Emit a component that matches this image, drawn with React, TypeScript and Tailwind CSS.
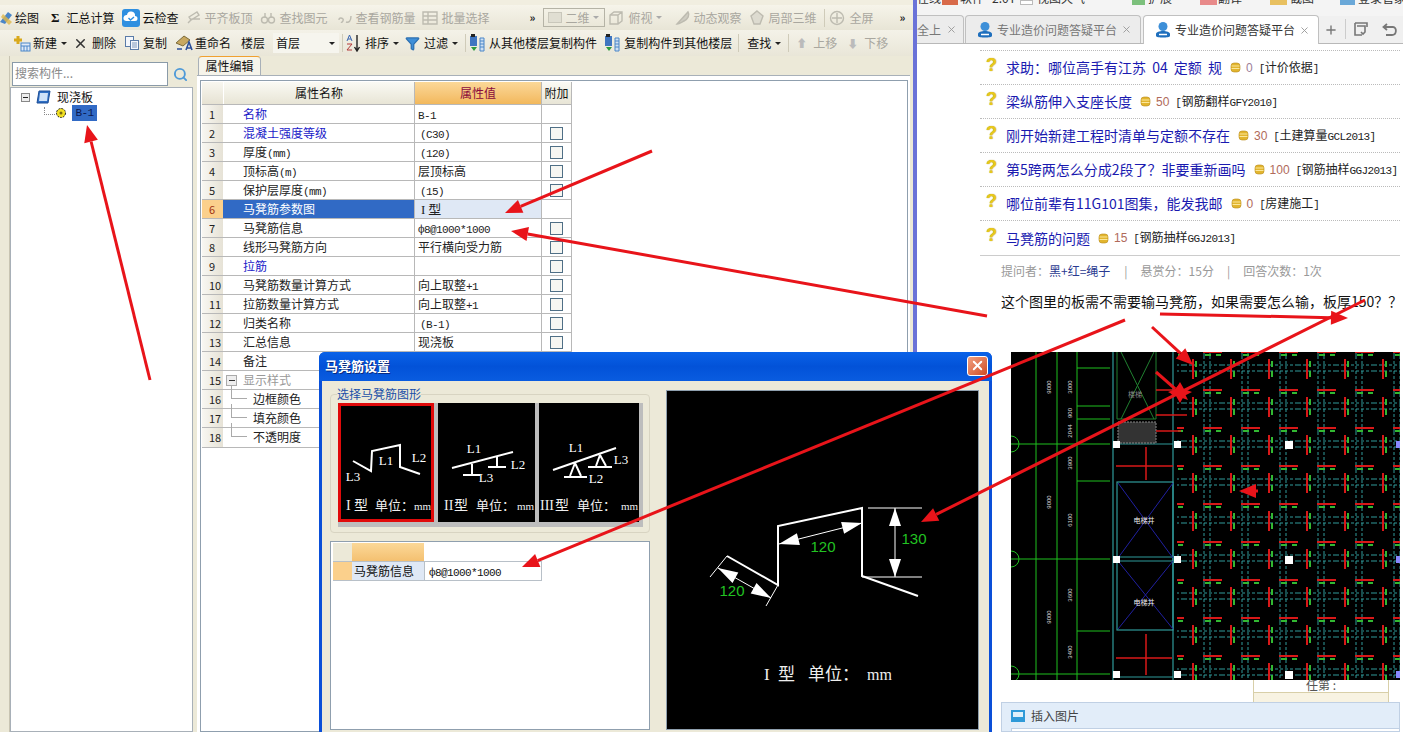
import type { ReactNode } from "react"
import { X, Plus, Search, Filter } from "lucide-react"

const cjk = { fontFamily: '"Noto Sans CJK SC", sans-serif' }
const serif = "Liberation Serif, serif"

function Caret({ muted }: { muted?: boolean }) {
  return <span className={`ml-[4px] h-0 w-0 border-x-[3px] border-t-[3px] border-x-transparent ${muted ? "border-t-[#aaa]" : "border-t-[#222]"}`} />
}

function Tool({ icon, label, muted, caret, gap, className }: { icon?: ReactNode; label: string; muted?: boolean; caret?: boolean; gap?: string; className?: string }) {
  return (
    <div className={`flex shrink-0 items-center ${className ?? ""}`}>
      {icon}
      <span className={`${gap ?? "ml-[4px]"} whitespace-nowrap text-[12px] ${muted ? "text-[#a9a79f]" : "text-[#111]"}`}>{label}</span>
      {caret && <Caret muted={muted} />}
    </div>
  )
}

function Sep({ className }: { className: string }) {
  return <div className={`h-[18px] w-px shrink-0 bg-[#cfcbb9] ${className}`} />
}

function Gray({ children }: { children: ReactNode }) {
  return <svg width="16" height="16" viewBox="0 0 16 16" fill="none" stroke="#bdbbb0" strokeWidth="1.4">{children}</svg>
}

function DocIcon() {
  return (
    <svg width="17" height="17" viewBox="0 0 17 17">
      <rect x="7" y="8" width="9" height="8" fill="#dfeaf8" stroke="#4a86c8" />
      <path d="M7 11h9M10 11v5M13 11v5" stroke="#4a86c8" />
      <path d="M4 1v8M0 5h8" stroke="#d9a91c" strokeWidth="3" />
    </svg>
  )
}

function CopyIcon() {
  return (
    <svg width="16" height="16" viewBox="0 0 16 16" fill="#f4f7fc" stroke="#5a7ba8">
      <rect x="1.5" y="1.5" width="8" height="10" />
      <rect x="6.5" y="5.5" width="8" height="9" />
      <path d="M8 8h5M8 10h5M8 12h5" stroke="#7d97bb" />
    </svg>
  )
}

function RenameIcon() {
  return (
    <svg width="18" height="18" viewBox="0 0 18 18">
      <path d="M1 9 9 2l6 4-7 6z" fill="#c8a860" stroke="#7b6b3a" />
      <path d="M2 15h5M11 16l3-8 3 8M12 14h4" stroke="#2b4f9a" strokeWidth="1.6" fill="none" />
    </svg>
  )
}

function SortIcon() {
  return (
    <svg width="16" height="18" viewBox="0 0 16 18" fill="none">
      <path d="M1 7 3.5 1 6 7M2 5h3" stroke="#3a66b0" />
      <path d="M1 10h5l-5 6h5" stroke="#b43a3a" />
      <path d="M11 1v15M8.5 13l2.5 4 2.5-4" stroke="#222" strokeWidth="1.4" />
    </svg>
  )
}

function FloorCopyIcon() {
  return (
    <svg width="16" height="18" viewBox="0 0 16 18">
      <rect x="1" y="2" width="7" height="10" fill="#3f75c0" />
      <rect x="2" y="0" width="4" height="3" fill="#222" />
      <path d="M2 13h6l-3 4z" fill="#2e9a3e" />
      <path d="M11 4h4v13h-4z" fill="#cfe0f2" stroke="#4a86c8" />
      <path d="M11 7h4M11 10h4M11 13h4" stroke="#4a86c8" />
    </svg>
  )
}

function CloudIcon() {
  return (
    <svg width="18" height="18" viewBox="0 0 18 18">
      <rect width="18" height="18" rx="3" fill="#2e8fe0" />
      <path d="M4 12a3 3 0 0 1 1-6 4 4 0 0 1 8 1 2.500 2.500 0 0 1 0 5z" fill="#fff" />
      <path d="m6.500 9 2 2 3.500-3" stroke="#2e8fe0" strokeWidth="1.400" fill="none" />
    </svg>
  )
}

function DrawIcon() {
  return (
    <svg width="13" height="16" viewBox="0 0 13 16">
      <path d="M0 12 8 2l4 3-7 9z" fill="#4a86c8" />
      <path d="M3 4 12 12 9 15 1 7z" fill="#e0b84a" opacity=".8" />
    </svg>
  )
}

function TabIcon() {
  return (
    <svg width="16" height="18" viewBox="0 0 16 18">
      <circle cx="8" cy="5.500" r="4.500" fill="#3d8fd8" />
      <path d="M1 13c0-4 14-4 14 0v2c0 2-14 2-14 0z" fill="#1f6fbd" />
      <path d="M4 13.500h8" stroke="#fff" strokeWidth="1.500" />
    </svg>
  )
}

function Coin() {
  return (
    <svg width="11" height="11" viewBox="0 0 11 11" className="shrink-0">
      <rect x="1" y="1" width="9" height="9" rx="3" fill="#e2b52e" stroke="#b88a18" strokeWidth=".6" />
      <path d="M1.500 4h8M1.500 6.500h8" stroke="#fbe79a" />
    </svg>
  )
}

function Row1() {
  return (
    <div className="flex h-[25px] items-center bg-linear-to-b from-[#f6f4ea] to-[#e8e5d6]">
      <Tool icon={<DrawIcon />} label="绘图" gap="ml-[2px]" />
      <Tool icon={<span className="text-[13px] font-bold text-[#111]" style={{ fontFamily: '"Liberation Serif", serif' }}>Σ</span>} label="汇总计算" gap="ml-[7px]" className="ml-[12px]" />
      <Tool icon={<CloudIcon />} label="云检查" gap="ml-[3px]" className="ml-[7px]" />
      <Tool muted icon={<Gray><path d="M2 13 6 9h8M3 7l8-5 2 3-8 5z" /></Gray>} label="平齐板顶" gap="ml-[3px]" className="ml-[7px]" />
      <Tool muted icon={<Gray><circle cx="4.500" cy="10" r="3" /><circle cx="11.500" cy="10" r="3" /><path d="M5 3v5M11 3v5" /></Gray>} label="查找图元" gap="ml-[4px]" className="ml-[7px]" />
      <Tool muted icon={<Gray><path d="M2 10c0-3 3-2 4-1s-1 4-2 3M9 12c3 1 5-1 5-6" /></Gray>} label="查看钢筋量" gap="ml-[3px]" className="ml-[9px]" />
      <Tool muted icon={<Gray><path d="M1 2h14v12H1zM1 6h14M1 10h14M6 2v12" /></Gray>} label="批量选择" gap="ml-[4px]" className="ml-[6px]" />
      <span className="ml-[40px] text-[11px] font-bold text-[#222]">»</span>
      <div className="ml-[8px] flex h-[19px] w-[62px] shrink-0 items-center border border-[#b5b3a6] pl-[4px]">
        <span className="h-[11px] w-[14px] border border-[#c9c7bb] bg-[#e0ded2]" />
        <span className="ml-[3px] text-[12px] text-[#a9a79f]">二维</span>
        <Caret muted />
      </div>
      <Tool muted caret icon={<Gray><path d="M2 5l4-3h8v9l-4 3H2zM2 5h8v9M10 5l4-3" /></Gray>} label="俯视" className="ml-[3px]" />
      <Tool muted icon={<Gray><path d="M2 14 13 2c2 3 0 7-4 9-2 1-5 3-7 3z" fill="#cfcdc2" /></Gray>} label="动态观察" gap="ml-[2px]" className="ml-[13px]" />
      <Tool muted icon={<Gray><path d="M8 1l6 5-3 8H5L2 6z" fill="#dddbd0" /></Gray>} label="局部三维" gap="ml-[3px]" className="ml-[8px]" />
      <Sep className="ml-[8px]" />
      <Tool muted icon={<Gray><circle cx="8" cy="8" r="6.500" /><path d="M8 3v10M3 8h10" /></Gray>} label="全屏" className="ml-[4px]" />
      <span className="ml-[26px] text-[11px] font-bold text-[#222]">»</span>
    </div>
  )
}

function Row2() {
  return (
    <div className="flex h-[26px] items-center bg-linear-to-b from-[#f4f2e8] to-[#e9e6d8] pl-[14px]">
      <Tool caret icon={<DocIcon />} label="新建" gap="ml-[2px]" />
      <Tool icon={<X size={15} strokeWidth={2.4} className="text-[#333]" />} label="删除" className="ml-[6px]" />
      <Tool icon={<CopyIcon />} label="复制" gap="ml-[3px]" className="ml-[8px]" />
      <Tool icon={<RenameIcon />} label="重命名" gap="ml-[2px]" className="ml-[8px]" />
      <span className="ml-[10px] text-[12px] text-[#111]">楼层</span>
      <div className="ml-[8px] flex h-[20px] w-[66px] items-center justify-between bg-[#f6f5ee] pl-[3px] pr-[4px] text-[12px] text-[#111]">
        首层
        <Caret />
      </div>
      <Sep className="ml-[3px]" />
      <Tool caret icon={<SortIcon />} label="排序" gap="ml-[3px]" className="ml-[3px]" />
      <Tool caret icon={<Filter size={15} className="fill-[#3f8fd8] text-[#2e70b0]" />} label="过滤" className="ml-[6px]" />
      <Sep className="ml-[7px]" />
      <Tool icon={<FloorCopyIcon />} label="从其他楼层复制构件" className="ml-[3px]" />
      <Tool icon={<FloorCopyIcon />} label="复制构件到其他楼层" className="ml-[7px]" />
      <Sep className="ml-[6px]" />
      <Tool caret label="查找" className="ml-[4px]" />
      <Sep className="ml-[7px]" />
      <Tool muted icon={<span className="w-[10px] text-center text-[11px] text-[#bbb]">⬆</span>} label="上移" gap="ml-[7px]" className="ml-[7px]" />
      <Tool muted icon={<span className="w-[10px] text-center text-[11px] text-[#bbb]">⬇</span>} label="下移" gap="ml-[7px]" className="ml-[10px]" />
    </div>
  )
}

function TreePanel() {
  return (
    <div className="flex w-[183px] shrink-0 flex-col pt-[5px]">
      <div className="flex h-[26px] items-center pl-[2px]">
        <div className="flex h-[24px] w-[156px] items-center border border-[#8a9aa8] bg-white pb-[3px] pl-[2px] text-[12px] text-[#8a8a8a]">搜索构件...</div>
        <Search size={15} strokeWidth={3} className="ml-[5px] text-[#4f9ad8]" />
      </div>
      <div className="flex-1 border border-[#a8b0b8] bg-white pl-[10px] pt-px">
        <div className="flex h-[16px] items-center">
          <span className="flex h-[9px] w-[9px] items-center justify-center border border-[#888] bg-[#eee]"><span className="h-px w-[5px] bg-[#222]" /></span>
          <svg width="15" height="15" viewBox="0 0 15 15" className="ml-[6px]"><path d="M3 1h11l-2 12H1z" fill="#2f6fc4" stroke="#1b4d96" /><path d="M4 3h8l-1 8H3z" fill="#cfe2f8" /></svg>
          <span className="ml-[6px] text-[12px] text-[#111]">现浇板</span>
        </div>
        <div className="flex h-[16px] items-center pl-[23px]">
          <span className="mb-[4px] h-[8px] w-[11px] border-b border-l border-dotted border-[#888]" />
          <svg width="12" height="12" viewBox="0 0 12 12"><circle cx="6" cy="6" r="4.500" fill="#f2e020" stroke="#222" strokeDasharray="2 1" /><circle cx="6" cy="6" r="1.500" fill="#7a6a10" /></svg>
          <span className="ml-[5px] flex h-[16px] w-[25px] items-center justify-center bg-[#316ac5] text-[11px] tracking-[-0.6px] text-[#0a1850]" style={{ fontFamily: '"Liberation Mono", monospace' }}>B-1</span>
        </div>
      </div>
    </div>
  )
}

type Prop = { name: string; unit?: string; value?: ReactNode; blue?: boolean; check?: boolean; selected?: boolean; gray?: boolean; leaf?: boolean; group?: boolean }

function Lat({ children, className }: { children: ReactNode; className?: string }) {
  return <span className={`text-[11px] tracking-[-0.6px] ${className ?? ""}`} style={{ fontFamily: '"Liberation Mono", monospace' }}>{children}</span>
}

const props: Prop[] = [
  { name: "名称", blue: true, value: <Lat>B-1</Lat> },
  { name: "混凝土强度等级", blue: true, check: true, value: <Lat className="ml-[2px]">(C30)</Lat> },
  { name: "厚度", unit: "(mm)", check: true, value: <Lat className="ml-[2px]">(120)</Lat> },
  { name: "顶标高", unit: "(m)", check: true, value: "层顶标高" },
  { name: "保护层厚度", unit: "(mm)", check: true, value: <Lat className="ml-[2px]">(15)</Lat> },
  { name: "马凳筋参数图", selected: true, value: <span className="ml-[3px] text-[13px] text-[#222]"><span style={{ fontFamily: serif }}>I</span> 型</span> },
  { name: "马凳筋信息", check: true, value: <Lat>ф8@1000*1000</Lat> },
  { name: "线形马凳筋方向", check: true, value: "平行横向受力筋" },
  { name: "拉筋", blue: true, check: true },
  { name: "马凳筋数量计算方式", check: true, value: <>向上取整<Lat>+1</Lat></> },
  { name: "拉筋数量计算方式", check: true, value: <>向上取整<Lat>+1</Lat></> },
  { name: "归类名称", check: true, value: <Lat className="ml-[2px]">(B-1)</Lat> },
  { name: "汇总信息", check: true, value: "现浇板" },
  { name: "备注" },
  { name: "显示样式", gray: true, group: true },
  { name: "边框颜色", leaf: true },
  { name: "填充颜色", leaf: true },
  { name: "不透明度", leaf: true },
]

function PropTable() {
  return (
    <div className="w-[370px] border-b border-[#b8b8b8]">
      <div className="flex h-[23px] border-b border-[#b8b8b8] text-[12px] text-[#111]">
        <div className="w-[21px] bg-linear-to-b from-[#f8f7f0] to-[#e6e2d3]" />
        <div className="flex w-[191px] items-center justify-center border-l border-white bg-linear-to-b from-[#fafaf4] to-[#e8e5d6]">属性名称</div>
        <div className="flex w-[127px] items-center justify-center border-l border-[#b8b8b8] bg-linear-to-b from-[#fbd898] to-[#f2b85c] text-[#8a0a3c]">属性值</div>
        <div className="flex w-[31px] items-center justify-center border-x border-[#b8b8b8] bg-linear-to-b from-[#fafaf4] to-[#e8e5d6]">附加</div>
      </div>
      {props.map((p, i) => (
        <div key={p.name} className="flex h-[19px] border-b border-[#b8b8b8] text-[12px] leading-[18px] text-[#222] last:border-b-0">
          <div className={`w-[21px] shrink-0 pl-[7px] text-[11px] ${i > 8 ? "pl-[4px]" : ""} ${p.selected ? "bg-[#fbd08c] text-[#a03010]" : "bg-linear-to-r from-[#f8f7f2] to-[#e6e2d6] text-[#222]"}`}>{i + 1}</div>
          <div className={`relative w-[191px] shrink-0 whitespace-nowrap ${p.leaf ? "pl-[30px]" : "pl-[20px]"} ${p.selected ? "bg-[#316ac5] text-white" : ""} ${p.blue ? "text-[#1a1ac8]" : ""} ${p.gray ? "text-[#999]" : ""}`}>
            {p.group && (
              <span className="absolute left-[3px] top-[4px] flex h-[11px] w-[11px] items-center justify-center border border-[#aaa] bg-[#eee]"><span className="h-px w-[6px] bg-[#333]" /></span>
            )}
            {p.leaf && <span className="absolute left-[8px] top-[-5px] h-[14px] w-[16px] border-b border-l border-[#aaa]" />}
            {p.name}
            {p.unit && <Lat>{p.unit}</Lat>}
          </div>
          <div className={`w-[127px] shrink-0 whitespace-nowrap border-l border-[#b8b8b8] pl-[3px] ${p.selected ? "bg-[#dfe8f5]" : ""}`}>{p.value}</div>
          <div className="flex w-[31px] shrink-0 items-center justify-center border-x border-[#b8b8b8]">
            {p.check && <span className="h-[13px] w-[13px] border border-[#4f6f86] bg-[#f6f6f2]" />}
          </div>
        </div>
      ))}
    </div>
  )
}

function ThumbLabel({ x, y, children }: { x: number; y: number; children: string }) {
  return <text x={x} y={y} textAnchor="middle" fontSize="13" fontFamily={serif} fill="#fff">{children}</text>
}

function ThumbCaption({ roman, x }: { roman: string; x: number[] }) {
  return (
    <text y={107} fontSize="14" fill="#eee" style={cjk}>
      <tspan x={x[0]} fontFamily={serif}>{roman}</tspan>
      <tspan x={x[1]}>型</tspan>
      <tspan x={x[2]} fontSize="13">{"单位\uFF1A"}</tspan>
      <tspan x={x[3]} fontSize="11" fontFamily={serif}>mm</tspan>
    </text>
  )
}

function ThumbOne() {
  return (
    <svg width="96" height="119" viewBox="3 3 90 113" className="shrink-0 border-[3px] border-[#e00a0a] bg-black">
      <polyline points="15,58 33,68 34,48 62,42 62,64 82,71" fill="none" stroke="#fff" strokeWidth="2" />
      <ThumbLabel x={48} y={62}>L1</ThumbLabel>
      <ThumbLabel x={81} y={59}>L2</ThumbLabel>
      <ThumbLabel x={15} y={78}>L3</ThumbLabel>
      <ThumbCaption roman="I" x={[8, 16, 37, 76]} />
    </svg>
  )
}

function ThumbTwo() {
  return (
    <svg width="97" height="119" viewBox="0 0 97 119" className="ml-[4px] shrink-0 bg-black">
      <path d="M14 65 75 49M34 61v11M25 72h17M59 54v10M50 64h18" fill="none" stroke="#fff" strokeWidth="2" />
      <ThumbLabel x={36} y={50}>L1</ThumbLabel>
      <ThumbLabel x={80} y={66}>L2</ThumbLabel>
      <ThumbLabel x={48} y={79}>L3</ThumbLabel>
      <ThumbCaption roman="II" x={[6, 16, 38, 79]} />
    </svg>
  )
}

function ThumbThree() {
  return (
    <svg width="100" height="119" viewBox="0 0 100 119" className="ml-[4px] shrink-0 bg-black">
      <path d="M14 67 77 45M36 60l-5 13M36 60l6 13M25 74h23M61 52l-4 11M61 52l6 11M49 64h24" fill="none" stroke="#fff" strokeWidth="2" />
      <ThumbLabel x={37} y={49}>L1</ThumbLabel>
      <ThumbLabel x={82} y={61}>L3</ThumbLabel>
      <ThumbLabel x={57} y={80}>L2</ThumbLabel>
      <ThumbCaption roman="III" x={[1, 16, 38, 82]} />
    </svg>
  )
}

function Preview() {
  return (
    <svg width="311" height="338" viewBox="0 0 311 338" className="block bg-black">
      <polyline points="60,165 111,194 111,135 195,117 195,185 251,205" fill="none" stroke="#fff" strokeWidth="2" />
      <path d="M60 165 43 186M111 194 99 215M51 177 104 207M112 153 195 132M201 117h54M195 186h60M228 117v69" stroke="#fff" strokeWidth="1" fill="none" />
      <path d="M228 117l-6 18h12zM228 186l-6-18h12zM112 153l20.900 .9-3-11.600zM195 132l-17.900 10.700-3-11.600zM51 177l14.500 15 5.800-10.400zM104 207l-20.300-4.600 5.800-10.400z" fill="#fff" />
      <g fill="#22c322" fontSize="15" fontFamily="Liberation Sans, sans-serif" textAnchor="middle">
        <text x={65} y={205}>120</text>
        <text x={156} y={161}>120</text>
        <text x={247} y={153}>130</text>
      </g>
      <text y={289} fontSize="17" fill="#eee" style={cjk}>
        <tspan x={97} fontFamily={serif}>I</tspan>
        <tspan x={111}>型</tspan>
        <tspan x={141}>{"单位\uFF1A"}</tspan>
        <tspan x={200} fontSize="16" fontFamily={serif}>mm</tspan>
      </text>
    </svg>
  )
}

function Dialog() {
  return (
    <div className="absolute left-[319px] top-[352px] flex h-[380px] w-[673px] flex-col overflow-hidden rounded-t-[6px] bg-[#0a4fd8]">
      <div className="flex h-[29px] shrink-0 items-center justify-between bg-linear-to-b from-[#0a62e8] via-[#0352d8] to-[#0a5ce0] pb-[2px] pl-[6px] pr-[4px]">
        <span className="text-[13px] font-bold text-white [text-shadow:1px_1px_0_#0a2a80]">马凳筋设置</span>
        <span className="flex h-[20px] w-[21px] items-center justify-center rounded-[3px] border border-white bg-linear-to-br from-[#f0a080] to-[#d04a20]">
          <X size={15} strokeWidth={3} className="text-white" />
        </span>
      </div>
      <div className="mx-[3px] flex flex-1 bg-[#ece9d8] pl-[8px] pt-[6px]">
        <div className="w-[320px] shrink-0">
          <fieldset className="h-[146px] rounded-[4px] border border-[#d8d4c2] pl-[7px]">
            <legend className="-ml-[1px] text-[12px] leading-[14px] text-[#1a4fa8]">选择马凳筋图形</legend>
            <div className="mt-[2px] flex h-[124px] w-[305px] bg-[#bdbdbd]">
              <ThumbOne />
              <ThumbTwo />
              <ThumbThree />
            </div>
          </fieldset>
          <div className="mt-[8px] h-[189px] border border-[#8f9fae] bg-white pl-[2px] pt-px">
            <div className="flex h-[18px] w-[209px]">
              <div className="w-[19px] bg-[#ece9d8]" />
              <div className="w-[72px] bg-linear-to-b from-[#fbd898] to-[#f4c070]" />
              <div className="flex-1" />
            </div>
            <div className="flex h-[20px] w-[209px] border-y border-[#b8c0c8] text-[12px] leading-[18px] text-[#111]">
              <div className="w-[19px] bg-[#fbd08c]" />
              <div className="w-[72px] bg-[#dfe8f5] pl-[2px]">马凳筋信息</div>
              <div className="flex-1 border-x border-[#b8c0c8] pl-[4px]"><Lat>ф8@1000*1000</Lat></div>
            </div>
          </div>
        </div>
        <div className="ml-[16px] mt-[3px] h-[340px] w-[313px] shrink-0 self-start border border-[#8f9fae]">
          <Preview />
        </div>
      </div>
    </div>
  )
}

const dims: [number, number, string][] = [
  [40, 35, "9000"], [61, 35, "3000"], [61, 61, "900"], [61, 79, "2044"], [61, 111, "3900"],
  [40, 150, "9000"], [61, 168, "6100"], [61, 243, "3600"], [40, 265, "9000"], [61, 300, "3400"],
]

function CadImage() {
  return (
    <svg width="389" height="328" viewBox="0 0 389 328" className="block bg-black">
      <defs>
        <pattern id="cell" x="173" y="4" width="38" height="38" patternUnits="userSpaceOnUse">
          <path d="M0 9h38M0 15h38M20 0v38M26 0v38" stroke="#2f9a9a" strokeDasharray="3 2" fill="none" />
          <path d="M9 3v20M19 34h20" stroke="#d81818" strokeWidth="2" fill="none" />
          <path d="M12 5v6M12 15v6M21 37h6M32 37h5" stroke="#32b832" strokeWidth="2" fill="none" />
        </pattern>
      </defs>
      <rect x="166" width="223" height="328" fill="url(#cell)" />
      <path d="M25 0v328M46 0v328M66 0v328M0 92h99M0 207h99M0 322h99M66 16h33M66 54h33M66 67h33M66 129h33M66 279h33" stroke="#1fbf1f" fill="none" />
      <g fill="none" stroke="#1fbf1f"><circle cx="0" cy="92" r="8" /><circle cx="0" cy="207" r="8" /><circle cx="0" cy="322" r="8" /></g>
      <path d="M102 0v328M162 0v328M106 92h56M102 325h60M106 205h56M106 209h56" stroke="#2f9a9a" strokeWidth="1.200" fill="none" />
      <rect x="106" y="130" width="56" height="148" fill="none" stroke="#2f9a9a" strokeWidth="1.200" />
      <path d="M107 131 162 206M162 131 107 206M107 209 162 277M162 209 107 277" stroke="#2020a0" fill="none" />
      <path d="M106 0v67h39V0M110 0 143 67M143 0 110 67" stroke="#208030" fill="none" />
      <rect x="107" y="70" width="38" height="21" fill="#333" stroke="#888" strokeDasharray="2 1" />
      <path d="M105 114h57M135 95v33M105 306h56M135 282v41M145 38h31M145 63h31M145 79h25" stroke="#d81818" strokeWidth="1.500" fill="none" />
      <g fill="#eee" fontSize="7" textAnchor="middle" style={cjk}>
        <text x={133} y={171}>电梯井</text>
        <text x={133} y={253}>电梯井</text>
        <text x={124} y={45} fill="#888">楼梯</text>
      </g>
      <g fill="#ddd" fontSize="6" textAnchor="middle" fontFamily="Liberation Sans, sans-serif">
        {dims.map(([x, y, t]) => (
          <text key={`${x}-${y}`} transform={`translate(${x} ${y}) rotate(-90)`}>{t}</text>
        ))}
      </g>
      <g>
        {[92, 207, 322].flatMap((y) => [105, 166, 277, 388].map((x) => (
          <rect key={`${x}-${y}`} x={x - 3} y={y - 3} width={x === 277 ? 8 : 7} height={x === 277 ? 8 : 7} fill={x === 388 ? "#8888ff" : "#fff"} />
        )))}
      </g>
    </svg>
  )
}

type Question = { title: string; score: string; tag: string; scoreTone?: string }

const questions: Question[] = [
  { title: "求助\uFF1A哪位高手有江苏 04 定额 规", score: "0", tag: "[计价依据]", scoreTone: "text-[#a08098]" },
  { title: "梁纵筋伸入支座长度", score: "50", tag: "[钢筋翻样GFY2010]" },
  { title: "刚开始新建工程时清单与定额不存在", score: "30", tag: "[土建算量GCL2013]" },
  { title: "第5跨两怎么分成2段了\uFF1F非要重新画吗", score: "100", tag: "[钢筋抽样GGJ2013]" },
  { title: "哪位前辈有11G101图集\uFF0C能发我邮", score: "0", tag: "[房建施工]" },
  { title: "马凳筋的问题", score: "15", tag: "[钢筋抽样GGJ2013]" },
]

function Tag({ text }: { text: string }) {
  return (
    <span className="ml-[6px] whitespace-nowrap text-[12px] text-[#222]">
      {text.split(/([[\]A-Z0-9]+)/).map((part, i) => (i % 2 ? <Lat key={i}>{part}</Lat> : part))}
    </span>
  )
}

function BrowserTab({ active, label, className }: { active?: boolean; label: string; className?: string }) {
  return (
    <div className={`flex h-[28px] w-[176px] shrink-0 items-center rounded-t-[4px] border border-b-0 border-[#c0c0c0] pl-[11px] pr-[8px] ${active ? "bg-white" : "bg-[#ececec]"} ${className ?? ""}`}>
      <TabIcon />
      <span className={`ml-[4px] flex-1 overflow-hidden whitespace-nowrap text-[12px] ${active ? "text-[#333]" : "text-[#777]"}`}>{label}</span>
      <X size={11} className="text-[#999]" />
    </div>
  )
}

function Swatch({ className }: { className: string }) {
  return <span className={`h-[5px] shrink-0 ${className}`} />
}

function Browser() {
  return (
    <div className="flex min-w-0 flex-1 flex-col bg-white">
      <div className="flex h-[16px] items-start overflow-hidden bg-[#f4f4f4] text-[12px] leading-[14px] text-[#333] [&>b]:-mt-[9px] [&>b]:shrink-0 [&>b]:font-normal">
        <b>在线</b>
        <Swatch className="ml-px w-[16px] bg-[#d86a4a]" />
        <b className="ml-[2px]">软件</b>
        <b className="ml-[8px]">2.0T</b>
        <Swatch className="ml-[4px] w-[13px] border border-[#bbb] bg-white" />
        <b className="ml-[4px]">视图天气</b>
        <Swatch className="ml-[47px] w-[13px] bg-[#7cc07c]" />
        <b className="ml-[3px]">扩展</b>
        <Swatch className="ml-[28px] w-[17px] bg-[#e88a8a]" />
        <b className="ml-px">翻译</b>
        <Swatch className="ml-[28px] w-[17px] bg-[#e8c060]" />
        <b className="ml-[3px]">截图</b>
        <Swatch className="ml-[26px] w-[15px] bg-[#6aa8d8]" />
        <b className="ml-[3px]">登录管家</b>
      </div>
      <div className="flex h-[28px] items-end border-b border-[#b8b8b8] bg-[#f0f0f0]">
        <div className="flex h-[28px] w-[47px] shrink-0 items-center justify-between rounded-tr-[4px] border-r border-t border-[#c0c0c0] bg-[#ececec] pr-[6px] text-[12px] text-[#777]">
          全上
          <X size={11} className="text-[#999]" />
        </div>
        <BrowserTab label="专业造价问题答疑平台" className="ml-[1px]" />
        <BrowserTab active label="专业造价问题答疑平台" className="relative top-px ml-[2px] h-[29px]" />
        <Plus size={14} strokeWidth={2.4} className="mb-[6px] ml-[5px] text-[#777]" />
        <div className="mb-[4px] ml-[7px] h-[20px] w-px bg-[#ccc]" />
        <svg width="17" height="15" viewBox="0 0 17 15" fill="none" stroke="#777" strokeWidth="1.600" className="mb-[6px] ml-[7px]"><path d="M2 1h12v4M2 1v12h7M4 4h8v6l-2 2-2-2" /></svg>
        <svg width="16" height="14" viewBox="0 0 16 14" fill="none" stroke="#777" strokeWidth="1.800" className="mb-[6px] ml-[12px]"><path d="M5 1 1.500 4 5 7M2 4h9c4 0 4 8-1 8H4" /></svg>
      </div>
      <div className="ml-[63px] mr-[3px] mt-[6px] border-t border-dotted border-[#bbb]">
        {questions.map((q) => (
          <div key={q.title} className="flex h-[34px] items-center border-b border-dotted border-[#bbb] pl-[6px] last:border-b-0">
            <span className="mb-[6px] w-[20px] text-[18px] font-bold leading-none text-[#e8c81c] [text-shadow:0_0_1px_#a08810]" style={{ fontFamily: '"Liberation Sans", sans-serif' }}>?</span>
            <span className="whitespace-nowrap text-[14px] text-[#1a1ab0] [word-spacing:3px]">{q.title}</span>
            <span className="ml-[8px]"><Coin /></span>
            <span className={`ml-[5px] text-[12px] ${q.scoreTone ?? "text-[#b06a5a]"}`} style={{ fontFamily: '"Liberation Sans", sans-serif' }}>{q.score}</span>
            <Tag text={q.tag} />
          </div>
        ))}
      </div>
      <div className="ml-[63px] mr-[3px] flex flex-1 flex-col border-t border-[#ccc] pl-[21px]">
        <div className="mt-[6px] flex h-[18px] items-center whitespace-nowrap text-[12px] text-[#999]">
          {"提问者\uFF1A"}<span className="text-[#2a3a90]">黑+红=绳子</span>
          <span className="ml-[14px]">|</span>
          <span className="ml-[13px]">{"悬赏分\uFF1A15分"}</span>
          <span className="ml-[13px]">|</span>
          <span className="ml-[13px]">{"回答次数\uFF1A1次"}</span>
        </div>
        <div className="mt-[11px] h-[20px] whitespace-nowrap text-[14px] leading-[20px] text-[#111]">{"这个图里的板需不需要输马凳筋\uFF0C如果需要怎么输\uFF0C板厚150\uFF1F\uFF1F"}</div>
        <div className="ml-[10px] mt-[41px]"><CadImage /></div>
        <div className="ml-[252px] flex h-[22px] w-[136px] shrink-0 flex-col border-x border-[#d8cfa8]">
          <div className="h-[13px] overflow-hidden border-b border-[#d8cfa8] text-center text-[12px] leading-[10px] text-[#555]">任第 :</div>
          <div className="flex-1 bg-[#f8f3e2]" />
        </div>
        <div className="flex flex-1 flex-col border border-[#c0d0e4] bg-[#e2edf9] pl-[9px]">
          <div className="flex h-[25px] items-center">
            <svg width="14" height="12" viewBox="0 0 14 12"><rect width="14" height="12" fill="#2f9ad8" /><rect x="2" y="2" width="10" height="5" fill="#dff1fb" /></svg>
            <span className="ml-[6px] text-[12px] text-[#444]">插入图片</span>
          </div>
          <div className="flex-1 border-l border-t border-[#c0d0e4] bg-white" />
        </div>
      </div>
    </div>
  )
}

function Arrow({ x1, y1, x2, y2 }: { x1: number; y1: number; x2: number; y2: number }) {
  const len = Math.hypot(x2 - x1, y2 - y1)
  const ux = (x2 - x1) / len
  const uy = (y2 - y1) / len
  const bx = x2 - ux * 17
  const by = y2 - uy * 17
  const head = `${x2},${y2} ${bx - uy * 7},${by + ux * 7} ${bx + uy * 7},${by - ux * 7}`
  return (
    <g>
      <line x1={x1} y1={y1} x2={bx} y2={by} stroke="#e8141a" strokeWidth="3" />
      <polygon points={head} fill="#e8141a" />
    </g>
  )
}

const arrows = [
  [150, 380, 87, 125],
  [652, 151, 505, 213],
  [987, 316, 511, 231],
  [1125, 320, 522, 567],
  [1365, 300, 921, 522],
  [1160, 314, 1348, 318],
  [1152, 327, 1193, 365],
  [1156, 372, 1188, 400],
  [1258, 491, 1239, 491],
]

export default function App() {
  return (
    <div className="relative flex h-[732px] w-[1403px] overflow-hidden bg-white" style={cjk}>
      <div className="flex w-[913px] shrink-0 flex-col bg-[#ece9d8]">
        <div className="h-[5px] shrink-0 bg-[#f1eee0]" />
        <Row1 />
        <Row2 />
        <div className="flex min-h-0 flex-1">
          <div className="w-[10px] shrink-0 border-r border-[#c8c4b2]" />
          <TreePanel />
          <div className="w-[4px] shrink-0" />
          <div className="flex min-w-0 flex-1 flex-col pr-[3px]">
            <div className="ml-[1px] flex h-[19px] w-[63px] items-center justify-center rounded-t-[4px] border border-b-0 border-[#a8b0b8] border-t-[#f0a030] bg-[#f6f4ea] text-[12px] text-[#111]">属性编辑</div>
            <div className="flex-1 border-t border-[#a8b0b8] bg-white pl-[3px] pr-[2px] pt-[4px]">
              <div className="h-full border border-[#8f9fae] pl-px pt-px">
                <PropTable />
              </div>
            </div>
          </div>
        </div>
      </div>
      <div className="w-[4px] shrink-0 bg-[#6a72d8]" />
      <Browser />
      <Dialog />
      <svg width="1403" height="732" viewBox="0 0 1403 732" className="pointer-events-none absolute left-0 top-0">
        {arrows.map(([x1, y1, x2, y2]) => (
          <Arrow key={`${x1}-${y1}`} x1={x1} y1={y1} x2={x2} y2={y2} />
        ))}
        <polygon points="1180,382 1184,389 1192,392 1184,396 1180,403 1176,396 1168,392 1176,389" fill="#e8141a" />
      </svg>
    </div>
  )
}
